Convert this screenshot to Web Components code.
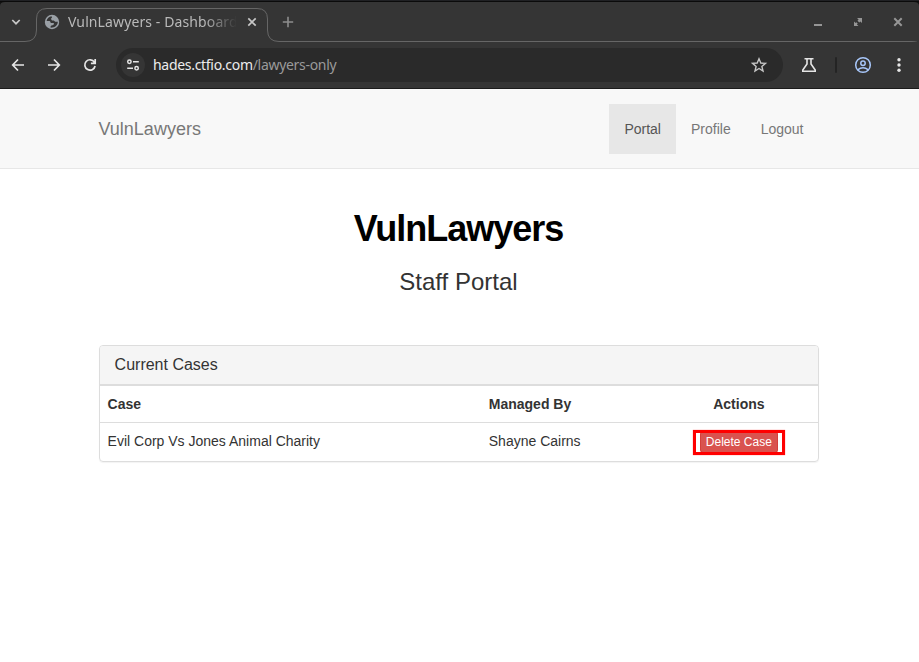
<!DOCTYPE html>
<html lang="en">
<head>
<meta charset="utf-8">
<title>VulnLawyers - Dashboard</title>
<style>
html,body{margin:0;padding:0;background:#fff}
body{width:919px;height:662px;overflow:hidden;font-family:"Liberation Sans",Arial,sans-serif;font-size:14px;line-height:20px;color:#333}
</style>
</head>
<body>
<browser-tabs><span>VulnLawyers - Dashboard</span></browser-tabs>
<browser-toolbar><span slot="host">hades.ctfio.com</span><span slot="path">/lawyers-only</span></browser-toolbar>
<site-nav brand="VulnLawyers">
  <nav-link active>Portal</nav-link><nav-link>Profile</nav-link><nav-link>Logout</nav-link>
</site-nav>
<page-title><span slot="title">VulnLawyers</span><span slot="subtitle">Staff Portal</span></page-title>
<case-panel>
  <span slot="heading">Current Cases</span>
  <case-row header><span>Case</span><span slot="manager">Managed By</span><span slot="action">Actions</span></case-row>
  <case-row><span>Evil Corp Vs Jones Animal Charity</span><span slot="manager">Shayne Cairns</span><danger-button slot="action">Delete Case</danger-button></case-row>
</case-panel>
<script>
const define = (name, html) => customElements.define(name, class extends HTMLElement {
  constructor() {
    super();
    this.attachShadow({mode: 'open'}).innerHTML = html;
  }
  connectedCallback() {
    const brand = this.shadowRoot.querySelector('.brand');
    if (brand) brand.textContent = this.getAttribute('brand');
  }
});

define('browser-tabs', `
<style>
:host{display:block;position:relative;height:42px;background:#353535;font-family:"Noto Sans",sans-serif;font-size:14px;line-height:20px;letter-spacing:.11px;color:#b9b9b9}
.outline{position:absolute;left:0;top:0}
.row{position:relative;display:flex;align-items:center;height:42px;padding-top:2px;box-sizing:border-box}
svg{display:block;flex:none}
.menu{margin-left:8px}
.globe{margin-left:20px}
.title{width:169px;margin-left:8px;overflow:hidden;white-space:nowrap;-webkit-mask-image:linear-gradient(90deg,#000 136px,transparent 169px);mask-image:linear-gradient(90deg,#000 136px,transparent 169px)}
.close{margin-left:7px}
.plus{margin-left:20px}
.win{display:flex;margin-left:auto;gap:24px;padding-right:13px}
</style>
<svg class="outline" width="919" height="42" fill="none">
  <path d="M0 0H919V2H0Z" fill="#202124"/><path d="M0 1.5H919" stroke="#0b0b0b"/>
  <path d="M0 2V6Q0 2 5 2ZM919 2V6Q919 2 914 2Z" fill="#111"/>
  <path d="M0 41.5H25Q36.5 41.5 36.5 30V19Q36.5 8.5 47 8.5H257Q267.5 8.5 267.5 19V30Q267.5 41.5 279 41.5H912Q916 41.5 919 43" stroke="#666"/>
</svg>
<div class="row">
  <svg class="menu" width="16" height="16" fill="none" stroke="#c7c7c7" stroke-width="1.7"><path d="M4.3 6L8 9.7L11.7 6"/></svg>
  <svg class="globe" width="16" height="16" viewBox="0 0 16 16"><circle cx="8" cy="8" r="7.2" fill="#9aa0a6"/><path d="M9.3 2.2C9.8 4 9 4.4 7.6 4.7C6.2 5 6 5.8 6.2 6.9H8.8C9.8 7.2 9.4 8.9 10.6 9H13.4C13 11.4 11 13.5 8.4 13.7L8 12.2L9.2 11.2L8 9.6H6.2L4.8 8.2H2.2C2.2 5 4.8 2.2 9.3 2.2Z" fill="#353535" transform="rotate(180 8 8)"/></svg>
  <div class="title"><slot></slot></div>
  <svg class="close" width="16" height="16" stroke="#c7c7c7" stroke-width="1.7"><path d="M4.3 4.3L11.7 11.7M11.7 4.3L4.3 11.7"/></svg>
  <svg class="plus" width="16" height="16" stroke="#8d8d8d" stroke-width="1.6"><path d="M8 2.8V13.2M2.8 8H13.2"/></svg>
  <div class="win">
    <svg width="16" height="16"><path d="M4 10H12V12H4Z" fill="#969696"/></svg>
    <svg width="16" height="16" fill="#969696"><path d="M7 4H12V9L10.4 7.4L9.3 8.5L7.5 6.7L8.6 5.6ZM4 7.5L5.6 9L6.4 8.3L7.7 9.6L6.9 10.4L8.5 12H4Z"/></svg>
    <svg width="16" height="16" stroke="#969696" stroke-width="2"><path d="M4.3 4.3L11.7 11.7M11.7 4.3L4.3 11.7"/></svg>
  </div>
</div>`);

define('browser-toolbar', `
<style>
:host{display:flex;align-items:center;height:47px;box-sizing:border-box;background:#353535;border-bottom:1px solid #1b1b1b;padding-left:9px;font-family:"Noto Sans",sans-serif;font-size:14px;line-height:20px}
svg{display:block;flex:none}
.back,.fwd{margin-right:18px}
.reload{margin-right:17px}
.omni{display:flex;align-items:center;width:667px;height:34px;border-radius:17px;background:#2a2a2a;box-sizing:border-box;padding:0 15px 0 5px}
.site{display:flex;align-items:center;justify-content:center;width:24px;height:24px;border-radius:12px;background:#353535}
.url{margin-left:8px;flex:1;white-space:nowrap;color:#ececec;letter-spacing:-.3px}
.url span{color:#9a9a9a}
.flask{margin-left:17px}
.sep{width:2px;height:16px;border-radius:1px;background:#242424;margin:0 17px}
.dots{margin-left:18px}
</style>
<svg class="back" width="18" height="18" fill="none" stroke="#e6e6e6" stroke-width="1.7"><path d="M15 9H4M9 3.5L3.7 9L9 14.5"/></svg>
<svg class="fwd" width="18" height="18" fill="none" stroke="#e6e6e6" stroke-width="1.7"><path d="M3 9H14M9 3.5L14.3 9L9 14.5"/></svg>
<svg class="reload" width="18" height="18" fill="none" stroke="#e6e6e6" stroke-width="1.7"><path d="M13.4 6.2A5.2 5.2 0 1 0 14.1 10M14.2 3V7.3H9.9"/></svg>
<div class="omni">
  <div class="site"><svg width="14" height="14" fill="none" stroke="#e6e6e6" stroke-width="1.5"><circle cx="3.4" cy="3.8" r="1.7"/><path d="M7 3.8H12.8M1.2 10.2H7"/><circle cx="10.6" cy="10.2" r="1.7"/></svg></div>
  <div class="url"><slot name="host"></slot><span><slot name="path"></slot></span></div>
  <svg width="18" height="18" fill="none" stroke="#c7c7c7" stroke-width="1.4"><path d="M9 2.7L10.8 7L15.5 7.4L11.9 10.4L13 15L9 12.5L5 15L6.1 10.4L2.5 7.4L7.2 7Z"/></svg>
</div>
<svg class="flask" width="18" height="18" fill="none" stroke="#e6e6e6" stroke-width="1.6"><path d="M4.5 2.7H13.5M7 3V8L2.8 14V15.2H15.2V14L11 8V3"/></svg>
<div class="sep"></div>
<svg width="18" height="18" fill="none" stroke="#a8c7fa" stroke-width="1.5"><circle cx="9" cy="9" r="7.3"/><circle cx="9" cy="7.3" r="2.2"/><path d="M3.7 13.8Q9 9.8 14.3 13.8"/></svg>
<svg class="dots" width="18" height="18" fill="#e6e6e6"><circle cx="9" cy="3.7" r="1.7"/><circle cx="9" cy="9" r="1.7"/><circle cx="9" cy="14.3" r="1.7"/></svg>`);

define('site-nav', `
<style>
:host{display:block;height:80px;box-sizing:border-box;background:#f8f8f8;border-bottom:1px solid #e7e7e7;padding-top:15px}
.inner{display:flex;justify-content:space-between;width:720px;margin-left:98.5px}
.brand{font-size:18px;line-height:20px;padding:15px 0;color:#777}
nav{display:flex}
</style>
<div class="inner"><div class="brand"></div><nav><slot></slot></nav></div>`);

define('nav-link', `
<style>
:host{display:block;padding:15px;color:#777}
:host([active]){background:#e7e7e7;color:#555;padding-left:15.4px}
</style><slot></slot>`);

define('page-title', `
<style>
:host{display:block;text-align:center;width:917px;padding-top:40px}
h1{margin:0;font-size:36px;line-height:40px;font-weight:bold;letter-spacing:-1px;color:#000}
h2{margin:20px 0 0;font-size:24px;line-height:26px;font-weight:normal;color:#333}
</style>
<h1><slot name="title"></slot></h1><h2><slot name="subtitle"></slot></h2>`);

define('case-panel', `
<style>
:host{display:block;width:720px;box-sizing:border-box;margin:50px 0 0 98.6px;border:1px solid #ddd;border-radius:4px;box-shadow:0 1px 1px rgba(0,0,0,.05);overflow:hidden}
h3{margin:0;padding:10px 15px;height:38px;box-sizing:border-box;background:#f5f5f5;font-size:16px;line-height:18px;font-weight:normal}
.rows{border-top:2px solid #ddd}
</style>
<h3><slot name="heading"></slot></h3><div class="rows"><slot></slot></div>`);

define('case-row', `
<style>
:host{display:grid;grid-template-columns:381.2px 179.4px 157.4px;height:38px;box-sizing:border-box}
:host([header]){font-weight:bold;height:37px;border-bottom:1px solid #ddd}
div{padding:8px}
.action{text-align:center}
</style>
<div><slot></slot></div><div><slot name="manager"></slot></div><div class="action"><slot name="action"></slot></div>`);

define('danger-button', `
<style>
:host{display:inline-block;position:relative;vertical-align:top;box-sizing:border-box;height:22px;padding:1px 5px;border:1px solid #d43f3a;border-radius:3px;background:#d9534f;color:#fff;font-size:12px;line-height:18px}
.mark{position:absolute;left:-8px;right:-8px;top:-2px;bottom:-3px;border:3px solid #f00;box-shadow:0 0 1px rgba(255,0,0,.6)}
</style><slot></slot><i class="mark"></i>`);
</script>
</body>
</html>
